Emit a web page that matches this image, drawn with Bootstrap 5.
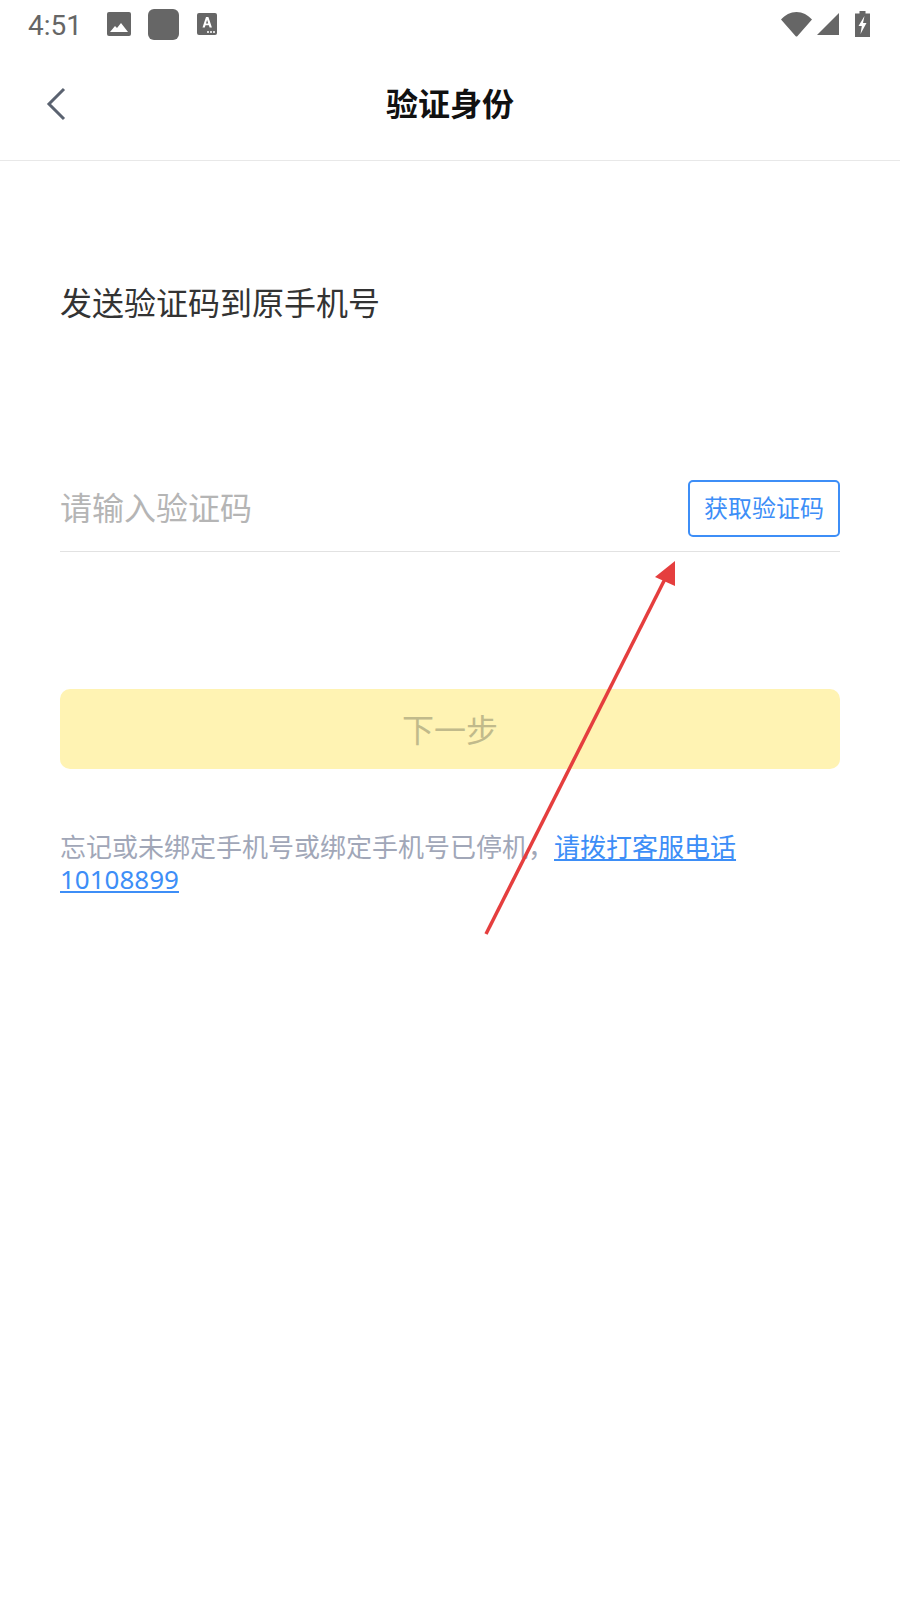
<!DOCTYPE html>
<html lang="zh">
<head>
<meta charset="UTF-8">
<meta name="viewport" content="width=device-width, initial-scale=1.0">
<title>验证身份</title>
<link href="https://cdn.jsdelivr.net/npm/bootstrap@5.3.3/dist/css/bootstrap.min.css" rel="stylesheet">
<style>
body { font-family: "Noto Sans", "Noto Sans CJK SC", sans-serif; background: #fff; height: 1600px; overflow: hidden; }
.phone-page { position: relative; height: 1600px; }
.status-row { height: 48px; padding: 0 30px 0 28px; color: #666; }
.status-time { font-family: Roboto, sans-serif; font-size: 28px; line-height: 50px; width: 79px; padding-top: 4px; }
.status-gap-a { margin-left: 17px; }
.status-gap-b { margin-left: 18px; }
.status-gap-c { margin-left: 5px; }
.top-bar { height: 113px; border-bottom: 1px solid #e8e8e8; position: relative; }
.back-btn { position: absolute; left: 46px; top: 39px; line-height: 0; }
.top-title { font-size: 32px; font-weight: 700; color: #111; line-height: 46px; }
.form-area { padding: 0 60px; }
.send-hint { font-size: 32px; color: #333; line-height: 46px; margin-top: 119px; }
.code-row { margin-top: 154px; height: 72px; border-bottom: 1px solid #e2e2e2; padding-bottom: 14px; }
.code-input { font-size: 32px; color: #333; line-height: 46px; margin-bottom: 2px; }
.code-input::placeholder { color: #b5b5b5; opacity: 1; }
.get-code { width: 152px; height: 57px; border: 2px solid #3d8ef7; border-radius: 5px; color: #3d8ef7; font-size: 24px; line-height: 1; padding: 0 0 2px; background: #fff; }
.next-btn { margin-top: 137px; height: 80px; background: #fff3b3; border: 0; border-radius: 10px; color: #c1ba8b; font-size: 32px; padding-top: 2px; }
.help-text { margin-top: 62px; font-size: 26px; line-height: 32px; color: #a1a7b8; }
.help-text a { color: #3d8ef7; }
.mark-arrow { position: absolute; left: 0; top: 0; pointer-events: none; }
</style>
</head>
<body>

<div class="phone-page">
  <div class="status-row d-flex align-items-center">
    <span class="status-time">4:51</span>
    <svg width="24" height="24" viewBox="0 0 24 24"><rect width="24" height="24" rx="2" fill="#666"/><path d="M3 20l5-6 2 2 4-5 7 9z" fill="#fff"/></svg>
    <svg class="status-gap-a" width="31" height="31" viewBox="0 0 31 31"><rect width="31" height="31" rx="6" fill="#666"/></svg>
    <svg class="status-gap-b" width="20" height="22" viewBox="0 0 20 22"><rect width="20" height="22" rx="2" fill="#666"/><path d="M5.500 14.500L9 4h2.400l3.500 10.500h-2.300l-.7-2.200H8.500l-.7 2.200zM9 10.500h2.200L10.100 6.800z" fill="#fff"/><path d="M10 18h2v2h-2zM13 18h2v2h-2zM16 18h2v2h-2z" fill="#ddd"/></svg>
    <div class="ms-auto d-flex align-items-center">
      <svg width="31" height="25" viewBox="0 0 31 25"><path d="M0 7.500C4 3 9.500 0 15.500 0S27 3 31 7.500L16.500 24a1.300 1.300 0 0 1-2 0z" fill="#666"/></svg>
      <svg class="status-gap-c" width="22" height="22" viewBox="0 0 22 22"><path d="M0 22L22 0v22z" fill="#666"/></svg>
      <svg class="ms-3" width="15" height="26" viewBox="0 0 15 26"><path d="M4.500 0h6v2.500H15V26H0V2.500h4.500z" fill="#666"/><path d="M9.500 5L3.500 15h3.300l-1.300 8 6-11H8z" fill="#fff"/></svg>
    </div>
  </div>

  <div class="top-bar d-flex align-items-center justify-content-center">
    <a class="back-btn" href="#">
      <svg width="20" height="34" viewBox="0 0 20 34"><path d="M18 2L3 17l15 15" fill="none" stroke="#5a6270" stroke-width="3"/></svg>
    </a>
    <div class="top-title">验证身份</div>
  </div>

  <div class="form-area">
    <div class="send-hint">发送验证码到原手机号</div>

    <div class="code-row d-flex align-items-center justify-content-between">
      <input class="code-input border-0 p-0 flex-grow-1" type="text" placeholder="请输入验证码">
      <button class="get-code flex-shrink-0" type="button">获取验证码</button>
    </div>

    <button class="next-btn w-100 d-block" type="button">下一步</button>

    <p class="help-text mb-0">忘记或未绑定手机号或绑定手机号已停机，<a href="#">请拨打客服电话10108899</a></p>
  </div>

  <svg class="mark-arrow" width="900" height="1600" viewBox="0 0 900 1600">
    <line x1="486" y1="934" x2="667" y2="575" stroke="#e53e3e" stroke-width="3.500"/>
    <path d="M675 561L655 577L675 586z" fill="#e53e3e"/>
  </svg>
</div>

<script src="https://cdn.jsdelivr.net/npm/bootstrap@5.3.3/dist/js/bootstrap.bundle.min.js"></script>
</body>
</html>
